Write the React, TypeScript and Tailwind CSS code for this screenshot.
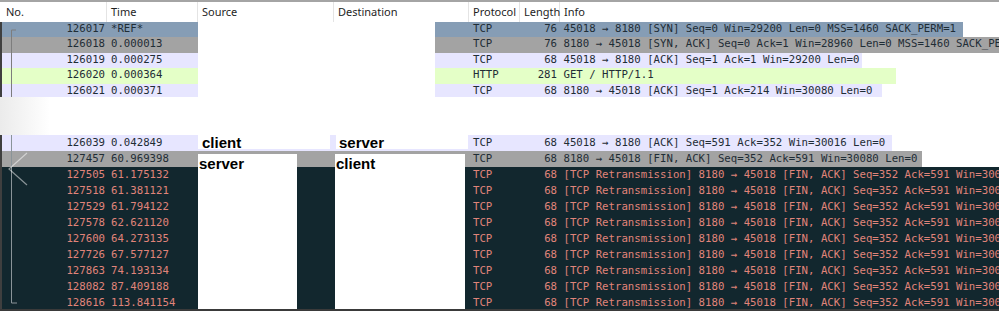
type TopRow = {
  no: string
  time: string
  proto: string
  len: string
  info: string
  bg: string
  width: string
}

type BottomRow = {
  no: string
  time: string
  info: string
}

const topRows: TopRow[] = [
  { no: '126017', time: '*REF*', proto: 'TCP', len: '76', info: '45018 → 8180 [SYN] Seq=0 Win=29200 Len=0 MSS=1460 SACK_PERM=1', bg: 'bg-[#869db5]', width: 'w-[528px]' },
  { no: '126018', time: '0.000013', proto: 'TCP', len: '76', info: '8180 → 45018 [SYN, ACK] Seq=0 Ack=1 Win=28960 Len=0 MSS=1460 SACK_PERM=1', bg: 'bg-[#a3a3a3]', width: 'w-[564px]' },
  { no: '126019', time: '0.000275', proto: 'TCP', len: '68', info: '45018 → 8180 [ACK] Seq=1 Ack=1 Win=29200 Len=0', bg: 'bg-[#e7e6ff]', width: 'w-[427px]' },
  { no: '126020', time: '0.000364', proto: 'HTTP', len: '281', info: 'GET / HTTP/1.1', bg: 'bg-[#e4ffc7]', width: 'w-[461px]' },
  { no: '126021', time: '0.000371', proto: 'TCP', len: '68', info: '8180 → 45018 [ACK] Seq=1 Ack=214 Win=30080 Len=0', bg: 'bg-[#e7e6ff]', width: 'w-[447px]' },
]

const retrans = '[TCP Retransmission] 8180 → 45018 [FIN, ACK] Seq=352 Ack=591 Win=30080 Len=0'

const darkRows: BottomRow[] = [
  { no: '127505', time: '61.175132', info: retrans },
  { no: '127518', time: '61.381121', info: retrans },
  { no: '127529', time: '61.794122', info: retrans },
  { no: '127578', time: '62.621120', info: retrans },
  { no: '127600', time: '64.273135', info: retrans },
  { no: '127726', time: '67.577127', info: retrans },
  { no: '127863', time: '74.193134', info: retrans },
  { no: '128082', time: '87.409188', info: retrans },
  { no: '128616', time: '113.841154', info: retrans },
]

const headers = [
  { label: 'No.', cls: 'w-[107px] pl-[6px]' },
  { label: 'Time', cls: 'w-[91px] pl-[4px]' },
  { label: 'Source', cls: 'w-[136px] pl-[4px]' },
  { label: 'Destination', cls: 'w-[135px] pl-[4px]' },
  { label: 'Protocol', cls: 'w-[51px] pl-[4px]' },
  { label: 'Length', cls: 'w-[40px] pl-[4px]' },
]

function NoTime({ no, time }: { no: string; time: string }) {
  return (
    <>
      <span className="w-[105px] shrink-0 text-right pr-[2px]">{no}</span>
      <span className="w-[91px] shrink-0 pl-[4px]">{time}</span>
    </>
  )
}

function ProtoInfo({ proto, len, info }: { proto: string; len: string; info: string }) {
  return (
    <>
      <span className="w-[51px] shrink-0 pl-[4px]">{proto}</span>
      <span className="w-[40px] shrink-0 text-right pr-[3px]">{len}</span>
      <span className="pl-[3.5px] whitespace-nowrap">{info}</span>
    </>
  )
}

export default function App() {
  const label = "font-['Liberation_Sans',Arial,sans-serif] font-bold text-[15px] leading-none text-black"

  return (
    <div className="w-[999px] h-[311px] overflow-hidden bg-white flex flex-col font-['DejaVu_Sans_Mono',monospace] text-[10.7px] leading-none">
      {/* column header */}
      <div className="h-[21.5px] shrink-0 flex items-stretch border-t-2 border-[#a4a4a4] bg-white font-['Noto_Sans',sans-serif] text-[11px] text-[#1e1e1e]">
        {headers.map((h) => (
          <div key={h.label} className={`${h.cls} shrink-0 flex items-center border-r border-[#e4e4e4]`}>
            {h.label}
          </div>
        ))}
        <div className="flex-1 flex items-center pl-[4px]">Info</div>
      </div>

      {/* first capture */}
      <div className="relative h-[75px] shrink-0 overflow-hidden border-l-2 border-[#3f3f3f] text-[#1f2d36]">
        {topRows.map((r) => (
          <div key={r.no} className="h-[15.5px] flex items-center">
            <div className={`${r.bg} h-full flex items-center`}>
              <NoTime no={r.no} time={r.time} />
            </div>
            <div className="w-[237px] h-full shrink-0 bg-white" />
            <div className={`${r.width} ${r.bg} h-full shrink-0 flex items-center overflow-hidden`}>
              <span className="w-[34px] shrink-0" />
              <ProtoInfo proto={r.proto} len={r.len} info={r.info} />
            </div>
          </div>
        ))}
        <svg className="absolute left-0 top-0 pointer-events-none" width="20" height="75">
          <path d="M14 8 H9.5 V75" fill="none" stroke="#7d7d7d" strokeWidth="1" />
        </svg>
      </div>

      {/* gap between the two captures */}
      <div className="h-[38.5px] shrink-0 flex">
        <div className="w-[50px] bg-linear-to-r from-[#ebebeb] to-white" />
      </div>

      {/* second capture */}
      <div className="relative h-[174px] shrink-0 overflow-hidden border-l-2 border-[#3f3f3f]">
        <div className="h-[16px] flex items-center text-[#1f2d36]">
          <div className="bg-[#e7e6ff] h-full flex items-center">
            <NoTime no="126039" time="0.042849" />
          </div>
          <div className="w-[132px] h-full shrink-0 bg-[#e7e6ff]">
            <div className={`h-[14px] bg-white pl-[4px] flex items-center ${label}`}>client</div>
          </div>
          <div className="w-[6px] h-full shrink-0 bg-[#e7e6ff]" />
          <div className="w-[132px] h-full shrink-0 bg-[#e7e6ff]">
            <div className={`h-[14px] bg-white pl-[3px] flex items-center ${label}`}>server</div>
          </div>
          <div className="w-[424px] h-full shrink-0 bg-[#e7e6ff] flex items-center overflow-hidden">
            <span className="w-[1px] shrink-0" />
            <ProtoInfo proto="TCP" len="68" info="45018 → 8180 [ACK] Seq=591 Ack=352 Win=30016 Len=0" />
          </div>
        </div>

        <div className="relative z-10 h-[16px] flex items-center text-[#1f2d36]">
          <div className="bg-[#a3a3a3] h-full flex items-center">
            <NoTime no="127457" time="60.969398" />
          </div>
          <div className="w-[99px] h-full shrink-0 bg-[#a3a3a3] pt-[3px]">
            <div className={`h-full bg-white pl-[1px] pt-[2px] ${label}`}>server</div>
          </div>
          <div className="w-[38px] h-full shrink-0 bg-[#a3a3a3]" />
          <div className="w-[130px] h-full shrink-0 bg-[#a3a3a3] pt-[3px]">
            <div className={`h-full bg-white pl-[1px] pt-[2px] ${label}`}>client</div>
          </div>
          <div className="w-[457px] h-full shrink-0 bg-[#a3a3a3] flex items-center overflow-hidden">
            <span className="w-[4px] shrink-0" />
            <ProtoInfo proto="TCP" len="68" info="8180 → 45018 [FIN, ACK] Seq=352 Ack=591 Win=30080 Len=0" />
          </div>
        </div>

        {darkRows.map((r) => (
          <div key={r.no} className="h-[16px] flex items-center bg-[#12272e] text-[#e0847a]">
            <NoTime no={r.no} time={r.time} />
            <div className="w-[99px] h-full shrink-0 bg-white" />
            <div className="w-[38px] h-full shrink-0" />
            <div className="w-[130px] h-full shrink-0 bg-white" />
            <div className="flex-1 h-full flex items-center overflow-hidden">
              <span className="w-[4px] shrink-0" />
              <ProtoInfo proto="TCP" len="68" info={r.info} />
            </div>
          </div>
        ))}

        <svg className="absolute left-0 top-0 pointer-events-none z-20" width="30" height="174">
          <path d="M9.5 0 V168 H15" fill="none" stroke="#8a9499" strokeWidth="1" />
          <path d="M25 18 L7 34 L25 50" fill="none" stroke="rgba(255,255,255,0.5)" strokeWidth="1.2" />
        </svg>
      </div>

      <div className="h-[2px] shrink-0 bg-[#3a3a3a]" />
    </div>
  )
}
